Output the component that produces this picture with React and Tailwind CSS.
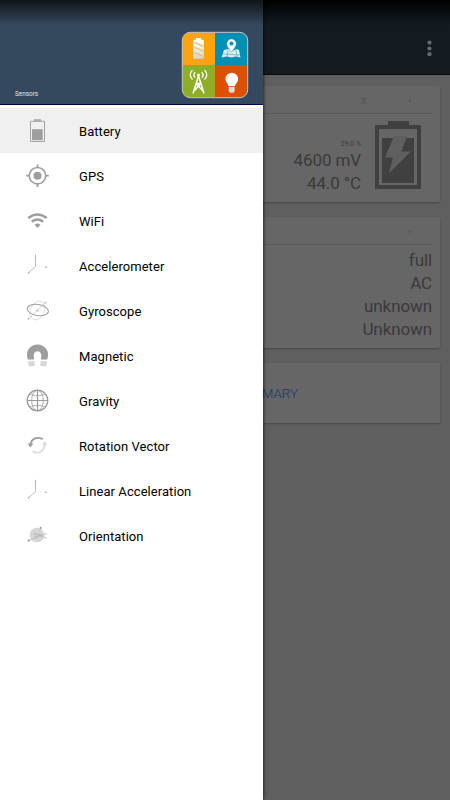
import { useState } from "react";
import clsx from "clsx";

function BatteryIcon() {
  return (
    <svg viewBox="0 0 24 24" className="mt-px w-6 h-6" fill="none">
      <path d="M9 .3h7v1.500H9z" fill="#9e9e9e" />
      <path d="M5.500 2.300h14v20.200h-14z" stroke="#a3a3a3" strokeWidth="1" />
      <path d="M7 10.200h10.700v11H7z" fill="#9e9e9e" />
    </svg>
  );
}

function GpsIcon() {
  return (
    <svg viewBox="0 0 24 24" className="mt-px w-6 h-6" fill="none" stroke="#9e9e9e">
      <circle cx="12.500" cy="11.700" r="8.200" strokeWidth="1.600" />
      <circle cx="12.500" cy="11.700" r="4" fill="#9e9e9e" stroke="none" />
      <path d="M12.500 .5V3.500M12.500 19.900v3M1.200 11.700h3.200M20.600 11.700h3.200" strokeWidth="1.800" />
    </svg>
  );
}

function WifiIcon() {
  return (
    <svg viewBox="0 0 24 24" className="mt-px w-6 h-6" fill="none" stroke="#9e9e9e">
      <path d="M3.300 9Q12.500 2 21.700 9" strokeWidth="2.600" />
      <path d="M6.800 12.700Q12.500 8.300 18.200 12.700" strokeWidth="2.500" />
      <path d="M9.500 15.800Q12.500 13.200 15.500 15.800L12.500 18.900z" fill="#9e9e9e" stroke="none" />
    </svg>
  );
}

function AxesIcon() {
  return (
    <svg viewBox="0 0 24 24" className="mt-px w-6 h-6" fill="none" stroke="#aaa" strokeWidth=".8">
      <path d="M10.500 1.500v11L3.200 19" />
      <path d="M10.500 12.500l10 .5" stroke="#f3f3f3" />
      <path d="M10.500 .3l.8 2.200H9.700zM2.500 19.800l.7-2 1.500 1.400z" fill="#aaa" stroke="none" />
      <path d="M20.300 12.300l2.200.9-2.200.9z" fill="#999" stroke="none" />
    </svg>
  );
}

function GyroscopeIcon() {
  return (
    <svg viewBox="0 0 24 24" className="mt-px w-6 h-6" fill="none">
      <ellipse cx="12.500" cy="11.500" rx="7" ry="9.800" stroke="#d4d4d4" strokeWidth=".7" transform="rotate(24 12.500 11.500)" />
      <path d="M3 20.300L21 3" stroke="#c4c4c4" strokeWidth=".7" />
      <path d="M2.500 20.800l.8-2.200 1.400 1.400zM21.500 2.500l-2.200.8 1.400 1.400z" fill="#aaa" />
      <circle cx="12.500" cy="11.500" r="1.500" fill="#d4d4d4" />
      <ellipse cx="12.800" cy="11" rx="10.700" ry="5.500" stroke="#9e9e9e" strokeWidth="1" transform="rotate(9 12.800 11)" />
    </svg>
  );
}

function MagnetIcon() {
  return (
    <svg viewBox="0 0 24 24" className="mt-px w-6 h-6">
      <path d="M2.800 15.500C1.700 12 1.500 8.500 3.500 5.300 7.500-1 17.500-1 21.500 5.300c2 3.200 1.800 6.700.7 10.200h-6.400c.5-2.300.7-4.200.1-5.800-1.300-3.200-5.500-3.200-6.800 0-.6 1.600-.4 3.500.1 5.800z" fill="#9e9e9e" />
      <path d="M2.800 17.500l6.500-.6.400 5-5.700.6zM22.200 17.500l-6.500-.6-.4 5 5.700.6z" fill="#d6d6d6" />
    </svg>
  );
}

function GlobeIcon() {
  return (
    <svg viewBox="0 0 24 24" className="mt-px w-6 h-6" fill="none" stroke="#a3a3a3" strokeWidth=".9">
      <circle cx="12.500" cy="11.500" r="10.300" strokeWidth="1.200" stroke="#999" />
      <ellipse cx="12.500" cy="11.500" rx="5.800" ry="10.200" />
      <path d="M12.500 1.200v20.600M2.200 11.500h20.600" strokeWidth="1.200" stroke="#999" />
      <path d="M4.800 4.800c4.500 2.500 10.900 2.500 15.400 0M4.800 18.200c4.500-2.500 10.900-2.500 15.400 0" />
    </svg>
  );
}

function RotationIcon() {
  return (
    <svg viewBox="0 0 24 24" className="mt-px w-6 h-6" fill="none">
      <path d="M5.500 11C6 5 12 2 17.700 5.200" stroke="#9e9e9e" strokeWidth="1.900" />
      <path d="M2.500 9.500h6L5.300 13.500z" fill="#9e9e9e" />
      <path d="M7.500 17.200C12.500 21 19.500 17 19.700 11" stroke="#dcdcdc" strokeWidth="1.900" />
      <path d="M17 11.200h5.500L19.500 6.700z" fill="#dcdcdc" />
    </svg>
  );
}

function OrientationIcon() {
  return (
    <svg viewBox="0 0 24 24" className="mt-px w-6 h-6" fill="none">
      <circle cx="12" cy="11" r="7.300" fill="#d6d6d6" />
      <path d="M3.500 16.500L21 9.700M8 9l13.500 5M9 10.500l8 .5M9 13.500l8-3" stroke="#b8b8b8" strokeWidth=".8" />
      <path d="M12.500 10.500l3.300-6" stroke="#c4c4c4" strokeWidth=".7" />
      <path d="M15 3h1.300v1.700H15zM3.200 15.500l1.600.5-.6 1.500-1.500-.6zM20.500 9.600h1.500M20.500 14h1.300" fill="#999" stroke="#aaa" strokeWidth=".5" />
    </svg>
  );
}

function AppLogo() {
  return (
    <svg viewBox="0 0 68 68" className="w-[68px] h-[68px]">
      <defs>
        <clipPath id="tile">
          <rect x="1.500" y="1.500" width="65" height="65" rx="8" />
        </clipPath>
        <linearGradient id="silver" x1="0" y1="0" x2="0" y2="1">
          <stop offset="0" stopColor="#fff" />
          <stop offset="1" stopColor="#d5d5d5" />
        </linearGradient>
      </defs>
      <g clipPath="url(#tile)">
        <path d="M0 0h34v34H0z" fill="#fca311" />
        <path d="M34 0h34v34H34z" fill="#008fb5" />
        <path d="M0 34h34v34H0z" fill="#8eae25" />
        <path d="M34 34h34v34H34z" fill="#e04e04" />
      </g>
      <rect x="1.300" y="1.300" width="65.400" height="65.400" rx="8" fill="none" stroke="#c8ccca" strokeWidth="1" />
      {/* battery */}
      <path d="M15 7h5v2.500h-5z" fill="#fff" />
      <rect x="12.300" y="8.800" width="10.500" height="19" rx="1" fill="url(#silver)" />
      <path d="M13.500 11.500l8.500 3.800M13.500 16.300l8.500 3.800M13.500 21.500l8.500 3.800" stroke="#efb65a" strokeWidth="1.100" />
      {/* map */}
      <path d="M43 19l4-1 4 2 5-2 2 1 1.500 7.500-5-1-4 1-5-1-5 1z" fill="#d9edf2" />
      <path d="M47 19l-1 7M55 19l1 7M42 23l17 1" stroke="#58aec5" strokeWidth=".7" />
      <path d="M50.500 21.500c-2-3.500-4.700-5.800-4.700-8.800a4.700 4.700 0 0 1 9.400 0c0 3-2.700 5.300-4.700 8.800z" fill="#fff" stroke="#48a5bf" strokeWidth=".5" />
      <circle cx="50.500" cy="12.500" r="1.900" fill="#008fb5" />
      {/* antenna */}
      <g fill="none" stroke="#fff" strokeWidth="1.500">
        <path d="M17.500 45L12 62.500M17.500 45L23 62.500M15.500 52.500h4l-6 7M15.500 53l6.500 7" />
        <path d="M14.200 46.500q-2.500-2.700 0-5.400M11.500 48.500q-4.500-4.700 0-9.400M20.800 46.500q2.500-2.700 0-5.400M23.500 48.500q4.500-4.700 0-9.400" strokeWidth="1.300" />
        <circle cx="17.500" cy="44" r="1.500" fill="#fff" stroke="none" />
      </g>
      {/* bulb */}
      <path d="M47.500 55c-.5-2.200-3-3.800-3-7a6.300 6.300 0 0 1 12.600 0c0 3.200-2.700 4.800-3.200 7z" fill="#fff" />
      <path d="M47.700 55.800h6v4.200l-1.200 1.700h-3.300L47.700 60z" fill="#dedede" />
      <path d="M46.200 48c0-2.200 1-3.700 2.800-4.400" fill="none" stroke="#f1c6b0" strokeWidth=".8" />
    </svg>
  );
}

const sensors = [
  { name: "Battery", icon: <BatteryIcon /> },
  { name: "GPS", icon: <GpsIcon /> },
  { name: "WiFi", icon: <WifiIcon /> },
  { name: "Accelerometer", icon: <AxesIcon /> },
  { name: "Gyroscope", icon: <GyroscopeIcon /> },
  { name: "Magnetic", icon: <MagnetIcon /> },
  { name: "Gravity", icon: <GlobeIcon /> },
  { name: "Rotation Vector", icon: <RotationIcon /> },
  { name: "Linear Acceleration", icon: <AxesIcon /> },
  { name: "Orientation", icon: <OrientationIcon /> },
];

const details = ["full", "AC", "unknown", "Unknown"];

function Card({ className, children }) {
  return (
    <div className={clsx("rounded-xs bg-[#666666] px-2 shadow-[0_1px_2px_rgba(0,0,0,0.25)]", className)}>
      {children}
    </div>
  );
}

export default function App() {
  const [selected, setSelected] = useState("Battery");

  return (
    <div className="relative h-[800px] w-[450px] overflow-hidden bg-[#5f5f5f] font-['Roboto',sans-serif]">
      <header className="flex h-[75px] items-end justify-end border-b border-[#05090f] bg-[linear-gradient(to_bottom,#000,#131b21_25px)] pr-[18px] pb-[17px]">
        <svg viewBox="0 0 5 17" className="h-[17px] w-[5px]" fill="#666b6e">
          <circle cx="2.500" cy="2.700" r="2.100" />
          <circle cx="2.500" cy="8.500" r="2.100" />
          <circle cx="2.500" cy="14.200" r="2.100" />
        </svg>
      </header>

      <main className="flex flex-col gap-[15px] px-2.5 pt-[11px] text-right text-[17px] leading-[23.200px] tracking-[-0.1px] text-[#3a3a3a]">
        <Card className="h-[116px]">
          <div className="flex h-[28px] items-center justify-end gap-[41px] border-b border-[#5a5a5a] pt-[2px] pr-[21px]">
            <svg viewBox="0 0 7 7" className="h-[7px] w-[7px]" fill="none" stroke="#4d4d4d" strokeWidth=".7">
              <path d="M.5 1.200h6M.5 6h6" />
              <circle cx="3.500" cy="3.500" r="1.400" />
            </svg>
            <svg viewBox="0 0 3 5" className="h-[5px] w-[3px]" fill="#505050">
              <path d="M2.500.5v4L.5 2.500z" />
            </svg>
          </div>
          <div className="flex justify-end gap-[14px] pt-[7px] pr-[11px]">
            <div className="pt-[18px]">
              <p className="h-[10px] text-[6.900px] leading-[10px] tracking-normal">29.0 %</p>
              <p>4600 mV</p>
              <p>44.0 °C</p>
            </div>
            <svg viewBox="0 0 46 68" className="h-[68px] w-[46px]">
              <path d="M13 0h21v5H13z" fill="#404040" />
              <path d="M2 6h42v60H2z" fill="none" stroke="#404040" strokeWidth="4" />
              <path d="M7 17h32v45H7z" fill="#404040" />
              <path d="M19 15h13l-5.500 15.500H36L14 52l4-15.500h-8z" fill="#5f5f5f" />
            </svg>
          </div>
        </Card>

        <Card className="h-[131px]">
          <div className="flex h-[28px] items-center justify-end border-b border-[#5a5a5a] pt-[2px] pr-[21px]">
            <svg viewBox="0 0 3 5" className="h-[5px] w-[3px]" fill="#505050">
              <path d="M2.500.5v4L.5 2.500z" />
            </svg>
          </div>
          <div className="pt-[3.500px]">
            {details.map((value) => (
              <p key={value}>{value}</p>
            ))}
          </div>
        </Card>

        <Card className="flex h-[60px] items-center justify-end">
          <button className="pt-[2px] pr-[134px] text-[13.500px] font-light text-[#17366f]">SUMMARY</button>
        </Card>
      </main>

      <aside className="absolute inset-y-0 left-0 w-[263px] bg-white shadow-[0_0_4px_rgba(0,0,0,0.9)]">
        <div className="flex h-[105px] items-end justify-between border-b border-[#00004a] bg-[linear-gradient(to_bottom,#101418,#34495e_25px)] pr-[14px] pl-[15px]">
          <span className="pb-[5px] text-[6.400px] leading-[10px] text-[#e4e7ea]">Sensors</span>
          <div className="pb-[5px]">
            <AppLogo />
          </div>
        </div>
        <nav className="pt-[3px]">
          {sensors.map((sensor) => (
            <button
              key={sensor.name}
              onClick={() => setSelected(sensor.name)}
              className={clsx(
                "flex h-[45px] w-full items-center gap-[30px] pl-[25px] text-[13px] tracking-[0.06px] text-black",
                selected === sensor.name && "bg-[#f0f0f0]"
              )}
            >
              {sensor.icon}
              <span className="pt-[2px]">{sensor.name}</span>
            </button>
          ))}
        </nav>
      </aside>
    </div>
  );
}
